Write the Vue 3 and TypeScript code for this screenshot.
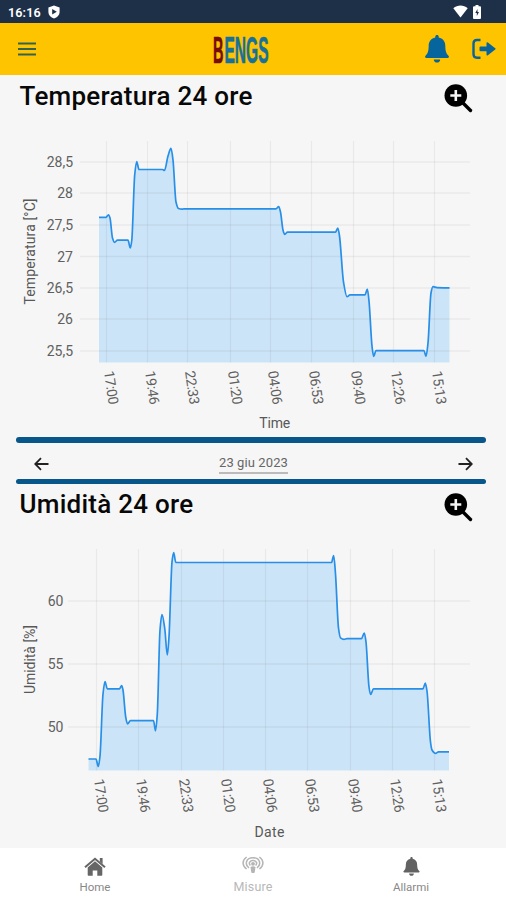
<script setup lang="ts">
type Point = [number, number]

interface Tick {
  pos: number
  label: string
}

interface Chart {
  id: string
  title: string
  top: number
  height: number
  plotTop: number
  base: number
  gridLeft: number
  labelRight: number
  xTicks: Tick[]
  yTicks: Tick[]
  yTitle: string
  yTitleCenter: number
  yTitleLength: number
  xTitle: string
  xTitleCenter: number
  xTitleY: number
  xTitleLength: number
  xLabelY: number
  points: Point[]
}

const times = ['17:00', '19:46', '22:33', '01:20', '04:06', '06:53', '09:40', '12:26', '15:13']
const ticks = (pos: number[], labels: string[]): Tick[] => pos.map((p, i) => ({ pos: p, label: labels[i] }))

const charts: Chart[] = [
  {
    id: 'temperatura',
    title: 'Temperatura 24 ore',
    top: 125,
    height: 312,
    plotTop: 141,
    base: 362.5,
    gridLeft: 80,
    labelRight: 73,
    xTicks: ticks([106.5, 147.5, 187.5, 230.5, 270.5, 311.5, 353.5, 393.5, 434.5], times),
    yTicks: ticks([162, 193, 225, 256.5, 288, 319, 351], ['28,5', '28', '27,5', '27', '26,5', '26', '25,5']),
    yTitle: 'Temperatura [°C]',
    yTitleCenter: 251.5,
    yTitleLength: 106,
    xTitle: 'Time',
    xTitleCenter: 274.8,
    xTitleY: 428,
    xTitleLength: 31,
    xLabelY: 371.5,
    points: [
      [99, 217.3], [106, 217.3], [108.5, 214.8], [110, 218], [112.5, 238], [114.5, 242.3], [117.5, 240.2],
      [128, 240.2], [130.3, 248], [131.8, 240], [134.7, 175], [136.7, 161.5], [139, 169.5], [162.5, 169.5],
      [164.5, 170.5], [168, 156], [171, 148.3], [173, 160], [176, 202], [178.5, 208.5], [182, 209.2],
      [184, 208.8], [276, 208.8], [278.7, 206.5], [280.5, 212], [283, 230], [284.7, 234.3], [287.5, 232.2],
      [335.5, 232.2], [337.8, 228], [339.5, 236], [343.5, 282], [347, 296.7], [350, 294.9], [365, 294.9],
      [367.3, 289], [369, 301], [372, 346], [373.7, 356.3], [376, 350.6], [424, 350.6], [426, 356.3],
      [428, 343], [431, 293], [433, 286.7], [437, 287.6], [449.5, 287.8],
    ],
  },
  {
    id: 'umidita',
    title: 'Umidità 24 ore',
    top: 532,
    height: 316,
    plotTop: 549,
    base: 770.5,
    gridLeft: 68,
    labelRight: 63.5,
    xTicks: ticks([96.5, 138.5, 181.5, 223.5, 265.5, 307.5, 350.5, 392.5, 434.5], times),
    yTicks: ticks([601, 664, 727], ['60', '55', '50']),
    yTitle: 'Umidità [%]',
    yTitleCenter: 659.5,
    yTitleLength: 69,
    xTitle: 'Date',
    xTitleCenter: 269.5,
    xTitleY: 836.5,
    xTitleLength: 30,
    xLabelY: 779.5,
    points: [
      [88.5, 759], [96, 759], [98.3, 766.5], [100, 756], [103, 694], [105, 681.5], [107.3, 688.8],
      [119.5, 688.8], [121.7, 685.5], [123, 690], [125.7, 717], [127.5, 724], [130.5, 720.6], [153.5, 720.6],
      [155.5, 730.8], [157.3, 714], [160, 630], [162, 614.5], [164.8, 629], [167.3, 655], [169, 637],
      [172, 562], [173.7, 552.5], [175.8, 562.5], [331.5, 562.5], [333.7, 555.5], [335.5, 574],
      [338.5, 628], [340.5, 637.8], [344, 639.3], [347, 638.6], [361.5, 638.6], [364.3, 633],
      [366, 642], [369, 687], [370.6, 694.5], [373.5, 688.8], [423, 688.8], [425.3, 683], [427, 691],
      [430.5, 742], [432, 750], [435.5, 753.4], [438.5, 751.9], [449, 751.9],
    ],
  },
]

/* Monotone cubic interpolation, so plateaus stay flat between readings. */
function linePath(pts: Point[]): string {
  const n = pts.length
  const slope = pts.slice(1).map((p, i) => (p[1] - pts[i][1]) / (p[0] - pts[i][0]))
  const tangent = pts.map((_, i) => {
    if (i === 0 || i === n - 1) return 0
    const a = slope[i - 1]
    const b = slope[i]
    return a * b <= 0 ? 0 : (2 * a * b) / (a + b)
  })
  let d = `M${pts[0][0]},${pts[0][1]}`
  for (let i = 1; i < n; i++) {
    const [x0, y0] = pts[i - 1]
    const [x1, y1] = pts[i]
    const h = (x1 - x0) / 3
    d += `C${x0 + h},${y0 + tangent[i - 1] * h} ${x1 - h},${y1 - tangent[i] * h} ${x1},${y1}`
  }
  return d
}

function areaPath(c: Chart): string {
  const first = c.points[0]
  const last = c.points[c.points.length - 1]
  return `${linePath(c.points)}L${last[0]},${c.base}L${first[0]},${c.base}Z`
}
</script>

<template>
  <div class="screen">
    <div class="status">
      <div class="status-left">
        <span>16:16</span>
        <svg width="12" height="14" viewBox="0 0 12 14">
          <path d="M6 .5 11.6 2.500V7c0 3.200-2.300 5.500-5.600 6.600C2.700 12.500.4 10.200.4 7V2.500z" fill="#fff" />
          <path d="M4.200 4v5.400L8.800 6.700z" fill="#1d3048" />
        </svg>
      </div>
      <div class="status-right">
        <svg width="15" height="13" viewBox="0 0 15 13">
          <path d="M.3 3.200C4.500-.5 10.500-.5 14.700 3.200L7.500 12.500z" fill="#fff" />
        </svg>
        <svg width="8" height="14" viewBox="0 0 8 14">
          <path d="M2.500 0h3v1.300H7q1 0 1 1V13q0 1-1 1H1q-1 0-1-1V2.300q0-1 1-1h1.500z" fill="#fff" />
          <path d="M4.500 4 2.300 8h1.500v3L6 7H4.500z" fill="#1d3048" />
        </svg>
      </div>
    </div>

    <header class="topbar">
      <svg class="menu" width="18" height="14" viewBox="0 0 18 14">
        <path d="M0 1.500h18M0 7h18M0 12.500h18" stroke="#36634f" stroke-width="1.900" />
      </svg>
      <svg class="logo" width="60" height="50" viewBox="0 0 60 50">
        <text class="logo-b" x="2" y="38.500" textLength="10.500" lengthAdjust="spacingAndGlyphs">B</text>
        <text class="logo-rest" x="13.500" y="38.500" textLength="44" lengthAdjust="spacingAndGlyphs">ENGS</text>
      </svg>
      <div class="actions">
        <svg width="24" height="28" viewBox="0 0 24 28">
          <path d="M12 0c1 0 1.700.7 1.700 1.600v.8c4 .8 6.600 4 6.600 8.200 0 6 1.100 8.200 3.200 10.200.9.900.3 2.200-1 2.200H1.500c-1.300 0-1.900-1.300-1-2.200 2.100-2 3.200-4.200 3.200-10.200 0-4.200 2.600-7.400 6.600-8.200v-.8C10.300.7 11 0 12 0zM8.800 24.500h6.400c0 1.900-1.400 3.100-3.200 3.100s-3.200-1.200-3.200-3.100z" fill="#06659c" />
        </svg>
        <svg width="24" height="22" viewBox="0 0 24 22">
          <path d="M8.500 2H5Q1.500 2 1.500 5.500v10.500Q1.500 19.700 5 19.700h3.500" fill="none" stroke="#06659c" stroke-width="2.400" />
          <path d="M8.500 8.600h6V5.300q0-1.800 1.400-.7l7.300 5.600q.9.700 0 1.400l-7.300 5.600q-1.400 1.100-1.400-.7v-3.300h-6q-1 0-1-1V9.600q0-1 1-1z" fill="#06659c" />
        </svg>
      </div>
    </header>

    <main>
      <template v-for="(chart, index) in charts" :key="chart.id">
        <section>
          <div class="heading" :class="chart.id">
            <h2>{{ chart.title }}</h2>
            <svg width="29" height="29" viewBox="0 0 29 29">
              <path d="M18.500 18.500 26.500 26.500" stroke="#000" stroke-width="3.400" stroke-linecap="round" />
              <circle cx="11.800" cy="11.500" r="11.300" fill="#000" />
              <path d="M11.800 6v11M6.300 11.500h11" stroke="#f6f6f6" stroke-width="2.600" />
            </svg>
          </div>
          <svg
            class="chart"
            width="506"
            :height="chart.height"
            :viewBox="`0 ${chart.top} 506 ${chart.height}`"
          >
            <path class="area" :d="areaPath(chart)" />
            <g class="grid">
              <line v-for="t in chart.yTicks" :key="t.label" :x1="chart.gridLeft" x2="470" :y1="t.pos" :y2="t.pos" />
              <line v-for="t in chart.xTicks" :key="t.label" :x1="t.pos" :x2="t.pos" :y1="chart.plotTop" :y2="chart.base" />
            </g>
            <path class="line" :d="linePath(chart.points)" />
            <g class="labels">
              <text
                v-for="t in chart.yTicks"
                :key="t.label"
                :x="chart.labelRight"
                :y="t.pos + 5"
                text-anchor="end"
              >{{ t.label }}</text>
              <text
                v-for="t in chart.xTicks"
                :key="t.label"
                :transform="`translate(${t.pos - 2.5} ${chart.xLabelY}) rotate(82)`"
                textLength="34"
              >{{ t.label }}</text>
              <text
                class="axis"
                text-anchor="middle"
                :transform="`translate(35 ${chart.yTitleCenter}) rotate(-90)`"
                :textLength="chart.yTitleLength"
              >{{ chart.yTitle }}</text>
              <text
                class="axis"
                text-anchor="middle"
                :x="chart.xTitleCenter"
                :y="chart.xTitleY"
                :textLength="chart.xTitleLength"
              >{{ chart.xTitle }}</text>
            </g>
          </svg>
        </section>

        <div v-if="index === 0" class="datebar">
          <svg width="15" height="14" viewBox="0 0 15 14">
            <path d="M14.500 7H1.500M7 1.200 1.200 7 7 12.800" fill="none" stroke="#222" stroke-width="1.800" />
          </svg>
          <span class="date">23 giu 2023</span>
          <svg width="15" height="14" viewBox="0 0 15 14">
            <path d="M.5 7h13M8 1.200 13.800 7 8 12.800" fill="none" stroke="#222" stroke-width="1.800" />
          </svg>
        </div>
      </template>
    </main>

    <nav class="tabs">
      <div class="tab">
        <svg width="22" height="19" viewBox="0 0 22 19">
          <path d="M15.800 1h2.800v6l-2.800-2.500z" fill="#666" />
          <path d="M1 10.300 11 1.700l10 8.600" fill="none" stroke="#666" stroke-width="2" />
          <path d="M3.700 10.500 11 4.300l7.300 6.200V18q0 .7-.7.700h-4.300v-5.200H8.700v5.200H4.400q-.7 0-.7-.7z" fill="#666" />
        </svg>
        <span>Home</span>
      </div>
      <div class="tab muted">
        <svg width="22" height="19" viewBox="0 0 22 19">
          <g fill="none" stroke="#b5b5b5" stroke-width="1.500">
            <path d="M4.600 2C-.1 5.400-.1 10.600 4.600 14M17.400 2c4.700 3.400 4.700 8.600 0 12" />
            <path d="M7 13c-4.300-3-3.600-10.300 4-10.300S19.300 10 15 13" />
            <path d="M8.400 10.500C6 8 8 5.600 11 5.600s5 2.400 2.600 4.900" />
          </g>
          <circle cx="11" cy="8.800" r="1.900" fill="#b5b5b5" />
          <path d="M8.500 12q2.500-1.400 5 0l-.8 5.400q-1.700 1.400-3.400 0z" fill="#b5b5b5" />
        </svg>
        <span>Misure</span>
      </div>
      <div class="tab alarms">
        <svg width="17" height="19" viewBox="0 0 24 28">
          <path d="M12 0c1 0 1.700.7 1.700 1.600v.8c4 .8 6.600 4 6.600 8.200 0 6 1.100 8.200 3.200 10.200.9.900.3 2.200-1 2.200H1.500c-1.300 0-1.900-1.300-1-2.200 2.100-2 3.200-4.200 3.200-10.200 0-4.200 2.600-7.400 6.600-8.200v-.8C10.300.7 11 0 12 0zM8.500 24.200h7c0 2.100-1.600 3.500-3.500 3.500s-3.500-1.400-3.500-3.500z" fill="#626262" />
        </svg>
        <span>Allarmi</span>
      </div>
    </nav>
  </div>
</template>

<style>
body {
  margin: 0;
  background: #f6f6f6;
}
</style>

<style scoped>
.screen {
  width: 506px;
  height: 900px;
  display: flex;
  flex-direction: column;
  overflow: hidden;
  background: #f6f6f6;
  font-family: Roboto, "Liberation Sans", sans-serif;
}
.status {
  height: 23px;
  box-sizing: border-box;
  padding: 0 25px 0 8px;
  display: flex;
  justify-content: space-between;
  align-items: center;
  background: #1d3048;
  color: #fff;
}
.status-left,
.status-right {
  display: flex;
  align-items: center;
  gap: 7px;
}
.status-left {
  padding-top: 1px;
}
.status-left span {
  font-size: 12.5px;
  font-weight: 600;
  letter-spacing: 0.15px;
}
.status-right {
  gap: 5px;
}
.topbar {
  height: 52px;
  box-sizing: border-box;
  padding: 0 10px 0 18px;
  display: grid;
  grid-template-columns: 193px 60px 1fr;
  align-items: center;
  background: #ffc400;
}
.logo text {
  font-family: "Liberation Sans", sans-serif;
  font-weight: 700;
  font-size: 37px;
}
.logo-b {
  fill: #750c08;
  stroke: #750c08;
  stroke-width: 0.7;
}
.logo-rest {
  fill: #17719a;
  stroke: #17719a;
  stroke-width: 0.7;
}
.actions {
  display: flex;
  justify-content: flex-end;
  align-items: center;
  gap: 23px;
}
.heading {
  height: 50px;
  box-sizing: border-box;
  padding: 8px 33px 0 19.5px;
  display: flex;
  justify-content: space-between;
  align-items: flex-start;
}
.heading.umidita {
  height: 48px;
}
h2 {
  margin: -1px 0 0;
  font-size: 26px;
  line-height: 29px;
  font-weight: 500;
  letter-spacing: 0.26px;
  color: #080808;
}
.umidita h2 {
  margin-top: -2px;
}
.heading svg {
  margin-top: 1px;
}
.chart {
  display: block;
}
.area {
  fill: #cce4f7;
}
.grid line {
  stroke: rgba(0, 0, 0, 0.05);
  stroke-width: 1.3;
}
.line {
  fill: none;
  stroke: #278fe8;
  stroke-width: 1.7;
  stroke-linejoin: round;
}
.labels text {
  font-size: 14px;
  fill: #606060;
}
.labels .axis {
  font-size: 14px;
  fill: #585858;
}
.datebar {
  height: 47px;
  box-sizing: border-box;
  margin: 0 20px 0 16px;
  padding: 6px 13px 0 18px;
  display: flex;
  justify-content: space-between;
  align-items: center;
  position: relative;
}
.datebar::before,
.datebar::after {
  content: "";
  position: absolute;
  left: 0;
  right: 0;
  height: 5.5px;
  border-radius: 3px;
  background: #07578a;
}
.datebar::before {
  top: 0;
}
.datebar::after {
  bottom: 0;
}
.date {
  font-size: 13px;
  line-height: 18px;
  letter-spacing: 0.1px;
  color: #666;
  border-bottom: 2px solid #bbb;
}
.tabs {
  height: 52px;
  display: grid;
  grid-template-columns: 190px 126px 190px;
  background: #fff;
}
.tab {
  display: flex;
  flex-direction: column;
  align-items: center;
  padding-top: 9px;
  gap: 4px;
  font-size: 11.5px;
  line-height: 14px;
  color: #888;
}
.muted {
  padding-top: 7px;
  gap: 6px;
  font-size: 12.5px;
  letter-spacing: 0.2px;
  color: #b8b8b8;
}
</style>
